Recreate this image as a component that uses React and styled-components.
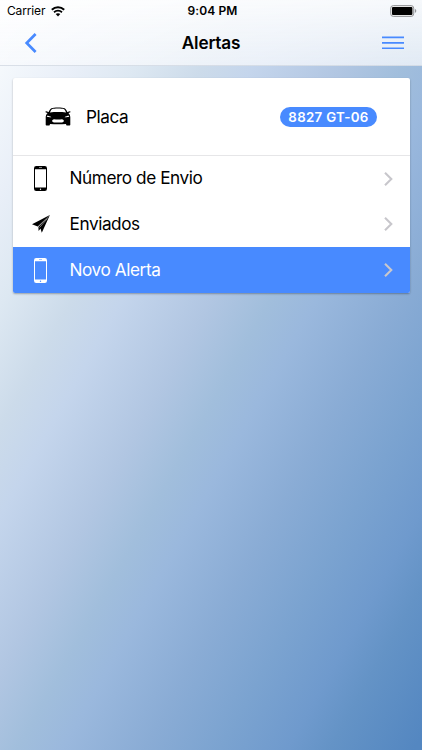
import React from "react";
import styled, { createGlobalStyle } from "styled-components";

const Global = createGlobalStyle`
  * { box-sizing: border-box; }
  body { margin: 0; }
`;

const Screen = styled.div`
  width: 422px;
  height: 750px;
  overflow: hidden;
  display: flex;
  flex-direction: column;
  font-family: Inter, "Liberation Sans", sans-serif;
  color: #000;
  background: linear-gradient(
    to bottom right,
    #ffffff 0%, #f4f8fc 5%, #e9eff8 13%, #dde8f2 20.5%, #ccdbea 28.5%,
    #c4d5ec 34.5%, #b1c6e2 45%, #a1bedc 52%, #9ab8dd 57.5%, #8aacd5 67%,
    #7ba3d0 76%, #6f9acd 84%, #6493c6 89%, #5487c1 99%
  );
`;

const Header = styled.header`
  height: 66px;
  flex: none;
  display: flex;
  flex-direction: column;
  background: linear-gradient(rgba(255, 255, 255, 0.9), rgba(248, 250, 253, 0.74));
  border-bottom: 1px solid rgba(150, 165, 190, 0.35);
`;

const StatusBar = styled.div`
  height: 20px;
  display: grid;
  grid-template-columns: 1fr auto 1fr;
  align-items: center;
  padding: 2px 5px 0 7px;
  font-size: 12px;
  line-height: 18px;
`;

const Carrier = styled.div`
  display: flex;
  align-items: center;
  gap: 5.5px;
  letter-spacing: -0.15px;
`;

const Clock = styled.div`
  padding-left: 1px;
  font-weight: 600;
  letter-spacing: 0.08px;
`;

const BatterySlot = styled.div`
  display: flex;
  justify-content: flex-end;
`;

const Toolbar = styled.div`
  height: 45px;
  display: grid;
  grid-template-columns: 60px 1fr 60px;
  align-items: center;
  padding: 0 18px 0 24px;
`;

const Title = styled.h1`
  margin: 0 0 0 -6px;
  font-size: 17.2px;
  font-weight: 600;
  line-height: 24px;
  text-align: center;
  letter-spacing: -0.2px;
`;

const IconButton = styled.button`
  display: flex;
  justify-content: ${({ $end }) => ($end ? "flex-end" : "flex-start")};
  padding: 0;
  border: 0;
  background: none;
  color: #488aff;
`;

const Card = styled.main`
  width: 397px;
  margin: 12px 0 0 12.5px;
  border-radius: 2px;
  overflow: hidden;
  background: #fff;
  box-shadow: 0 1px 2px rgba(0, 0, 0, 0.3);
`;

const PlateRow = styled.div`
  height: 77px;
  display: flex;
  align-items: center;
  padding: 0 32.5px 0 32px;
`;

const PlateLabel = styled.span`
  flex: 1;
  margin-left: 15.5px;
  font-size: 17.2px;
  line-height: 22px;
  letter-spacing: -0.45px;
`;

const Badge = styled.span`
  width: 97px;
  height: 20px;
  border-radius: 10px;
  background: #488aff;
  color: #fff;
  font-size: 13.3px;
  font-weight: 600;
  line-height: 20px;
  text-align: center;
  letter-spacing: 0.3px;
`;

const Menu = styled.div`
  height: 138px;
  border-top: 1px solid #e6e6e8;
  display: grid;
  grid-template-rows: 45px 46px 46px;
`;

const MenuItem = styled.div`
  display: flex;
  align-items: center;
  padding-right: 17px;
  background: ${({ $active }) => ($active ? "#488aff" : "#fff")};
  color: ${({ $active }) => ($active ? "#fff" : "#000")};
`;

const ItemIcon = styled.span`
  width: 57px;
  display: flex;
  justify-content: center;
  padding-right: 1px;
`;

const ItemLabel = styled.span`
  flex: 1;
  padding-bottom: 1px;
  font-size: 17.2px;
  line-height: 22px;
  letter-spacing: -0.42px;
`;

const WifiIcon = () => (
  <svg width="14" height="11" viewBox="0 0 14 11" fill="none" stroke="#000">
    <path d="M0.8 3.8C4.3.5 9.700.5 13.200 3.800" strokeWidth="2" />
    <path d="M3 6.200c2.300-2 5.700-2 8 0" strokeWidth="1.800" />
    <path d="M7 10.400 4.700 8c1.200-1.100 3.400-1.100 4.600 0z" fill="#000" stroke="none" />
  </svg>
);

const BatteryIcon = () => (
  <svg width="27" height="12" viewBox="0 0 27 12">
    <rect x="0.7" y="0.6" width="23" height="10.8" rx="2.6" fill="#eee" stroke="#929498" />
    <rect x="2" y="2" width="20.4" height="8" rx="1" fill="#000" />
    <path d="M24.900 4.100c1.800.4 1.800 3.400 0 3.800z" fill="#929498" />
  </svg>
);

const BackIcon = () => (
  <svg width="14" height="21" viewBox="0 0 14 21" fill="none" stroke="currentColor" strokeWidth="2.7">
    <path d="M11.600 2 2.700 11l8.900 9" />
  </svg>
);

const MenuIcon = () => (
  <svg width="22" height="14" viewBox="0 0 22 14" fill="currentColor">
    <path d="M0 .5h22v1.700H0zM0 6h22v1.700H0zM0 11.400h22v1.700H0z" />
  </svg>
);

const CarIcon = () => (
  <svg width="26" height="19" viewBox="0 0 26 19">
    <path d="M3.700 4.900 1.200 4.200C.3 4.100.2 5.300 1 5.500l1.600.4C1.300 7.100.7 8.600.7 10.600v7.100c0 .5.3.8.8.8h2.600c.5 0 .8-.3.8-.8v-.8c5.400.5 10.800.5 16.200 0v.8c0 .5.3.8.8.8h2.600c.5 0 .8-.3.8-.8v-7.100c0-2-.6-3.500-1.900-4.700l1.600-.4c.8-.2.7-1.400-.2-1.300l-2.500.7C21.400 3 20.500 1.800 19.600 1.300 17.600.3 8.400.3 6.400 1.300 5.500 1.800 4.600 3 3.700 4.900z" />
    <path d="M4.900 5.500C5.500 3.900 6.200 2.600 6.900 2.200c1.900-.8 10.300-.8 12.200 0 .7.4 1.400 1.700 2 3.300-4.900-.6-11.300-.6-16.200 0z" fill="#fff" />
    <path d="M1.900 8.700c1.900 0 3.300.5 4.500 1.500-1.900.2-3.600 0-4.500-.4zM24.100 8.700c-1.900 0-3.300.5-4.500 1.500 1.900.2 3.600 0 4.500-.4zM7 14c.5-1.100 1.100-1.700 2-1.800 2.600.3 5.400.3 8 0 .9.100 1.500.7 2 1.800-.5.9-1.100 1.400-2 1.400H9c-.9 0-1.500-.5-2-1.400z" fill="#fff" />
  </svg>
);

const PhoneIcon = () => (
  <svg width="13" height="25" viewBox="0 0 13 25" fill="currentColor">
    <path
      fillRule="evenodd"
      d="M2.200 0h8.600A2.200 2.200 0 0 1 13 2.200v20.600a2.200 2.200 0 0 1-2.200 2.200H2.200A2.200 2.200 0 0 1 0 22.800V2.200A2.200 2.200 0 0 1 2.200 0zM1 3.200v18.400h11V3.200zM5 1.500v.5h3v-.5zM6.500 22.500a.7.7 0 1 0 0 1.400.7.7 0 0 0 0-1.400z"
    />
  </svg>
);

const SendIcon = () => (
  <svg width="18" height="18" viewBox="0 0 18 18" fill="currentColor">
    <path d="M17.900 0 0 9.200l5.700 2.300z" />
    <path d="M17.900 0 6.400 11.800l.2 4.200 1.900-2.500 1.300 4.300z" />
    <path d="M7.500 12.500 15.500 3.400" stroke="#fff" strokeWidth=".5" />
  </svg>
);

const DetailIcon = () => (
  <svg width="9" height="14" viewBox="0 0 9 14" fill="none" stroke="#c8c7cc" strokeWidth="2.1">
    <path d="M1 .8 7.300 7 1 13.200" />
  </svg>
);

const items = [
  { label: "Número de Envio", Icon: PhoneIcon },
  { label: "Enviados", Icon: SendIcon },
  { label: "Novo Alerta", Icon: PhoneIcon, active: true },
];

export default function App() {
  return (
    <Screen>
      <Global />
      <Header>
        <StatusBar>
          <Carrier>
            Carrier
            <WifiIcon />
          </Carrier>
          <Clock>9:04 PM</Clock>
          <BatterySlot>
            <BatteryIcon />
          </BatterySlot>
        </StatusBar>
        <Toolbar>
          <IconButton aria-label="Voltar">
            <BackIcon />
          </IconButton>
          <Title>Alertas</Title>
          <IconButton aria-label="Menu" $end>
            <MenuIcon />
          </IconButton>
        </Toolbar>
      </Header>
      <Card>
        <PlateRow>
          <CarIcon />
          <PlateLabel>Placa</PlateLabel>
          <Badge>8827 GT-06</Badge>
        </PlateRow>
        <Menu>
          {items.map(({ label, Icon, active }) => (
            <MenuItem key={label} $active={active}>
              <ItemIcon>
                <Icon />
              </ItemIcon>
              <ItemLabel>{label}</ItemLabel>
              <DetailIcon />
            </MenuItem>
          ))}
        </Menu>
      </Card>
    </Screen>
  );
}
